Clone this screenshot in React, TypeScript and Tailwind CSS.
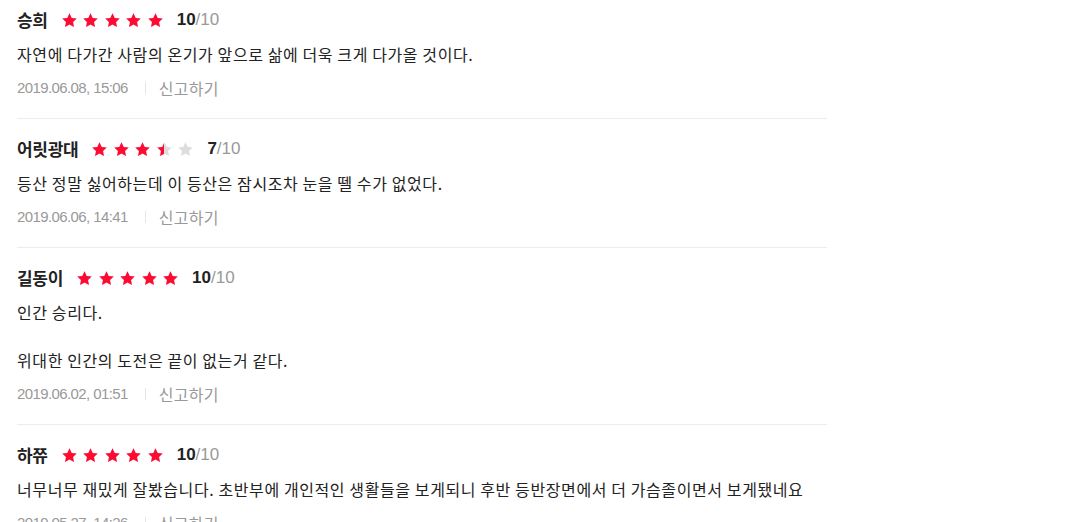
import React from 'react';

type Review = {
  name: string;
  score: number;
  lines: string[];
  date: string;
};

const REVIEWS: Review[] = [
  {
    name: '승희',
    score: 10,
    lines: ['자연에 다가간 사람의 온기가 앞으로 삶에 더욱 크게 다가올 것이다.'],
    date: '2019.06.08, 15:06',
  },
  {
    name: '어릿광대',
    score: 7,
    lines: ['등산 정말 싫어하는데 이 등산은 잠시조차 눈을 뗄 수가 없었다.'],
    date: '2019.06.06, 14:41',
  },
  {
    name: '길동이',
    score: 10,
    lines: ['인간 승리다.', '', '위대한 인간의 도전은 끝이 없는거 같다.'],
    date: '2019.06.02, 01:51',
  },
  {
    name: '하쮸',
    score: 10,
    lines: ['너무너무 재밌게 잘봤습니다. 초반부에 개인적인 생활들을 보게되니 후반 등반장면에서 더 가슴졸이면서 보게됐네요'],
    date: '2019.05.27, 14:26',
  },
];

const STAR_PATH = 'M12 1.8l3.1 6.6 7.1.9-5.2 4.9 1.3 7.1L12 17.8l-6.3 3.5 1.3-7.1L1.8 9.3l7.1-.9z';

function Star({ fill }: { fill: number }) {
  return (
    <span className="relative block w-[17px] h-[17px]">
      <svg viewBox="0 0 24 24" className="absolute inset-0 w-[17px] h-[17px] text-[#dddddd]" fill="currentColor">
        <path d={STAR_PATH} />
      </svg>
      {fill > 0 && (
        <span className="absolute inset-y-0 left-0 overflow-hidden" style={{ width: `${fill * 100}%` }}>
          <svg viewBox="0 0 24 24" className="w-[17px] h-[17px] text-[#ff0a33]" fill="currentColor">
            <path d={STAR_PATH} />
          </svg>
        </span>
      )}
    </span>
  );
}

function Stars({ score }: { score: number }) {
  const value = score / 2;
  return (
    <div className="flex items-center gap-[4.5px]">
      {[0, 1, 2, 3, 4].map((i) => (
        <Star key={i} fill={Math.max(0, Math.min(1, value - i))} />
      ))}
    </div>
  );
}

function ReviewItem({ review }: { review: Review }) {
  return (
    <li className="pt-5 pb-5 first:pt-[10px] border-b border-[#ececec]">
      {/* 이름 + 별점 */}
      <div className="flex items-center h-5">
        <span className="text-[17px] font-bold text-[#222] tracking-[-0.3px]">{review.name}</span>
        <span className="ml-[13px]">
          <Stars score={review.score} />
        </span>
        <span className="ml-[13px] text-[17px] leading-5 font-['Liberation_Sans',sans-serif]">
          <b className="text-[#222]">{review.score}</b>
          <span className="text-[#999]">/10</span>
        </span>
      </div>

      {/* 본문 */}
      <div className="mt-3 text-[16px] leading-6 text-[#222] tracking-[0.6px]">
        {review.lines.map((line, i) => (
          <p key={i} className="h-6">
            {line}
          </p>
        ))}
      </div>

      {/* 날짜 / 신고 */}
      <div className="mt-3 flex items-center h-5 text-[#999]">
        <span className="text-[15px] font-['Liberation_Sans',sans-serif] tracking-[-0.6px]">{review.date}</span>
        <span className="ml-[17px] mr-[13px] w-px h-3 bg-[#e6e6e6]" />
        <span className="text-[16px] tracking-[0.3px]">신고하기</span>
      </div>
    </li>
  );
}

export default function App() {
  return (
    <div className="min-h-screen bg-white font-['Noto_Sans_CJK_KR','Noto_Sans',sans-serif]">
      <ul className="ml-[17px] w-[810px]">
        {REVIEWS.map((r) => (
          <ReviewItem key={r.date} review={r} />
        ))}
      </ul>
    </div>
  );
}
